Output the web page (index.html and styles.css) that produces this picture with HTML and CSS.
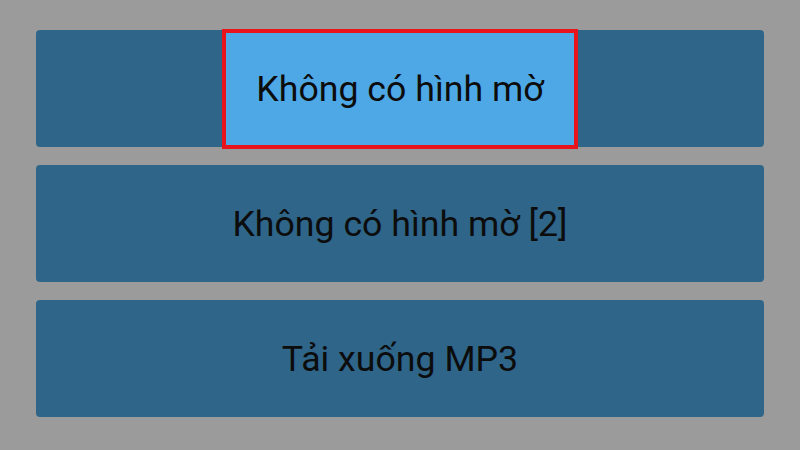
FILE: index.html
```html
<!DOCTYPE html>
<html lang="vi">
<head>
<meta charset="utf-8">
<link rel="stylesheet" href="styles.css">
</head>
<body>
<div class="list">
  <div class="btn">
    <div class="pressed">Không có hình mờ</div>
  </div>
  <div class="btn">Không có hình mờ [2]</div>
  <div class="btn">Tải xuống MP3</div>
</div>
</body>
</html>
```
FILE: styles.css
```css
html, body {
  margin: 0;
  padding: 0;
  width: 800px;
  height: 450px;
  background: #9b9b9b;
  overflow: hidden;
}
.list {
  display: flex;
  flex-direction: column;
  gap: 18px;
  padding: 30px 36px 0 36px;
}
.btn {
  height: 117px;
  background: #2e6589;
  border-radius: 4px;
  display: flex;
  align-items: center;
  justify-content: center;
  font-family: Roboto, "Noto Sans", sans-serif;
  font-size: 35.7px;
  color: #0c0c0c;
}
.btn:first-child {
  align-items: stretch;
}
.pressed {
  width: 348px;
  margin: -1px 0 -2px 0;
  background: #4ea8e6;
  border: 4px solid #e8141c;
  display: flex;
  align-items: center;
  justify-content: center;
}
```
